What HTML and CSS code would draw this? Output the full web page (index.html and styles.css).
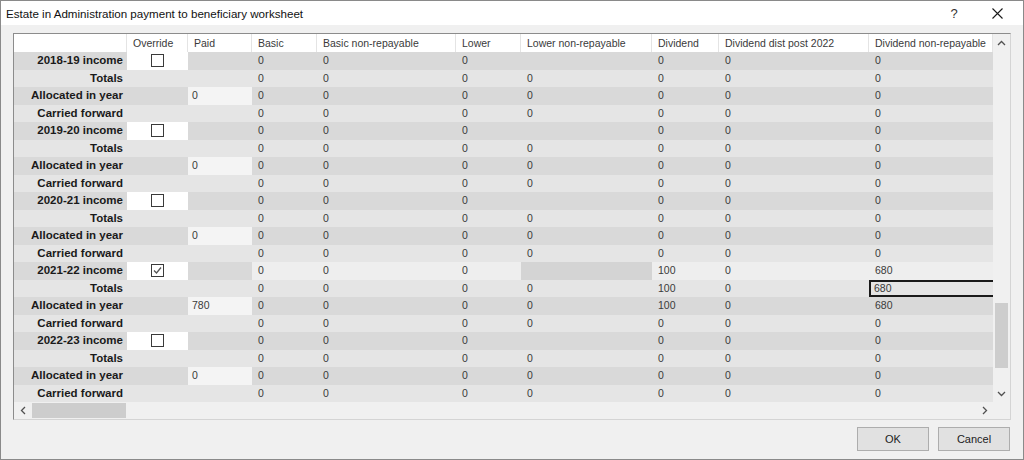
FILE: index.html
```html
<!DOCTYPE html>
<html lang="en">
  <head>
    <meta charset="UTF-8" />
    <title>Estate in Administration payment to beneficiary worksheet</title>
    <link rel="stylesheet" href="styles.css">
  </head>
  <body>
    <div id="dialog">
      <div class="titlebar">
        <span class="title">Estate in Administration payment to beneficiary worksheet</span>
        <span class="help">?</span>
        <svg class="close" width="11" height="11" viewBox="0 0 11 11">
          <path d="M0.5 0.5 L10.5 10.5 M10.5 0.5 L0.5 10.5" stroke="#1a1a1a" stroke-width="1.1" fill="none" />
        </svg>
      </div>
      <div class="content">
        <div class="frame">
          <div class="frame-top">
            <div id="sheet" class="sheet">
              <div class="row head">
                <div class="cell"></div>
                <div class="cell">Override</div>
                <div class="cell">Paid</div>
                <div class="cell">Basic</div>
                <div class="cell">Basic non-repayable</div>
                <div class="cell">Lower</div>
                <div class="cell">Lower non-repayable</div>
                <div class="cell">Dividend</div>
                <div class="cell">Dividend dist post 2022</div>
                <div class="cell">Dividend non-repayable</div>
              </div>
            </div>
            <div class="vscroll">
              <div class="arrow">
                <svg width="9" height="6" viewBox="0 0 9 6"><path d="M1 5 L4.5 1.5 L8 5" stroke="#505050" stroke-width="1.3" fill="none" /></svg>
              </div>
              <div class="track">
                <div class="vthumb"></div>
              </div>
              <div class="arrow">
                <svg width="9" height="6" viewBox="0 0 9 6"><path d="M1 1 L4.5 4.5 L8 1" stroke="#505050" stroke-width="1.3" fill="none" /></svg>
              </div>
            </div>
          </div>
          <div class="hscroll">
            <div class="arrow">
              <svg width="6" height="9" viewBox="0 0 6 9"><path d="M5 1 L1.5 4.5 L5 8" stroke="#505050" stroke-width="1.3" fill="none" /></svg>
            </div>
            <div class="hthumb"></div>
            <div class="spacer"></div>
            <div class="arrow">
              <svg width="6" height="9" viewBox="0 0 6 9"><path d="M1 1 L4.5 4.5 L1 8" stroke="#505050" stroke-width="1.3" fill="none" /></svg>
            </div>
            <div class="corner"></div>
          </div>
        </div>
      </div>
      <div class="buttons">
        <button class="button">OK</button>
        <button class="button">Cancel</button>
      </div>
    </div>
    <script>
      const years = ["2018-19", "2019-20", "2020-21", "2021-22", "2022-23"];
      const sheet = document.getElementById("sheet");

      const checkbox = (checked) => {
        const tick = checked
          ? '<svg width="11" height="11" viewBox="0 0 11 11"><path d="M2 5.5 L4.5 8 L9 2.5" stroke="#555" stroke-width="1.3" fill="none" /></svg>'
          : "";
        return '<span class="box">' + tick + "</span>";
      };

      const addRow = (label, cells, tone) => {
        const row = document.createElement("div");
        row.className = "row " + tone;
        const head = document.createElement("div");
        head.className = "cell label";
        head.textContent = label;
        row.appendChild(head);
        cells.forEach((cell) => {
          const el = document.createElement("div");
          const item = typeof cell === "string" ? { t: cell } : cell;
          el.className = "cell " + (item.c || "");
          if (item.html) {
            el.innerHTML = item.html;
          } else {
            el.textContent = item.t;
          }
          row.appendChild(el);
        });
        sheet.appendChild(row);
      };

      years.forEach((year) => {
        const live = year === "2021-22";
        const div = live ? "100" : "0";
        const dnr = live ? "680" : "0";
        const hi = live ? "hi" : "";

        addRow(
          year + " income",
          [
            { html: checkbox(live), c: "white check" },
            "",
            { t: "0", c: hi },
            { t: "0", c: hi },
            { t: "0", c: hi },
            { t: "", c: live ? "dim" : "" },
            { t: div, c: hi },
            { t: "0", c: hi },
            { t: dnr, c: hi },
          ],
          "dark"
        );
        addRow(
          "Totals",
          ["", "", "0", "0", "0", "0", div, "0", { t: dnr, c: live ? "focus" : "" }],
          "light"
        );
        addRow(
          "Allocated in year",
          ["", { t: live ? "780" : "0", c: "edit" }, "0", "0", "0", "0", div, "0", dnr],
          "dark"
        );
        addRow("Carried forward", ["", "", "0", "0", "0", "0", "0", "0", "0"], "light");
      });
    </script>
  </body>
</html>
```

FILE: styles.css
```css
* {
  margin: 0;
  padding: 0;
  box-sizing: border-box;
}

body {
  width: 1024px;
  height: 460px;
  overflow: hidden;
  background-color: #f0f0f0;
  font-family: "Liberation Sans", Arial, sans-serif;
}

#dialog {
  width: 1024px;
  height: 460px;
  display: flex;
  flex-direction: column;
  border: 1px solid #8a8a8a;
  background-color: #f0f0f0;
}

.titlebar {
  height: 24px;
  display: flex;
  align-items: center;
  padding: 0 20px 0 5px;
  background-color: #ffffff;
  font-size: 11.6px;
  color: #111;
}

.title {
  flex: 1;
}

.help {
  width: 14px;
  text-align: center;
  font-size: 13px;
  color: #333;
  margin-right: 31px;
}

.content {
  padding: 8px 12px 0 12px;
}

.frame {
  width: 998px;
  border: 1px solid;
  border-color: #8c8c8c #d4d4d4 #d4d4d4 #8c8c8c;
}

.frame-top {
  display: flex;
}

.sheet {
  width: 979px;
}

.row {
  display: grid;
  grid-template-columns: 113px 61px 64px 65px 139px 65px 131px 67px 150px 124px;
  height: 17.5px;
  font-size: 10.5px;
  color: #3a3a3a;
}

.row.head {
  height: 18px;
  background-color: #ffffff;
}

.row.head .cell {
  line-height: 18px;
  padding-left: 6px;
  border-right: 1px solid #e4e4e4;
  white-space: nowrap;
}

.row.dark {
  background-color: #d9d9d9;
}

.row.light {
  background-color: #e5e5e5;
}

.cell {
  line-height: 17.5px;
  padding-left: 6px;
  white-space: nowrap;
  overflow: hidden;
}

.cell.label {
  text-align: right;
  padding: 0 4px 0 0;
  font-size: 11.5px;
  font-weight: bold;
  color: #1a1a1a;
}

.cell.white {
  background-color: #ffffff;
}

.cell.check {
  display: flex;
  justify-content: center;
  align-items: center;
  padding: 0;
}

.box {
  width: 13px;
  height: 13px;
  border: 1px solid #3a3a3a;
  background-color: #ffffff;
  display: flex;
  align-items: center;
  justify-content: center;
}

.cell.edit {
  background-color: #f4f4f4;
  padding-left: 4px;
}

.cell.hi {
  background-color: #eeeeee;
}

.cell.dim {
  background-color: #d4d4d4;
}

.cell.focus {
  border: 2px solid #1a1a1a;
  border-right: none;
  line-height: 13.5px;
  padding-left: 3px;
}

.vscroll {
  width: 17px;
  display: flex;
  flex-direction: column;
  background-color: #f0f0f0;
}

.arrow {
  width: 17px;
  height: 17px;
  display: flex;
  align-items: center;
  justify-content: center;
}

.track {
  flex: 1;
}

.vthumb {
  width: 13px;
  height: 65px;
  margin: 252px 0 0 2px;
  background-color: #cdcdcd;
}

.hscroll {
  height: 17px;
  display: flex;
  background-color: #f0f0f0;
}

.hthumb {
  width: 94px;
  height: 15px;
  margin: 1px 0 0 1px;
  background-color: #cdcdcd;
}

.spacer {
  flex: 1;
}

.corner {
  width: 17px;
}

.buttons {
  display: flex;
  justify-content: flex-end;
  gap: 9px;
  padding: 7px 13px 0 0;
}

.button {
  width: 72px;
  height: 24px;
  background-color: #e1e1e1;
  border: 1px solid #adadad;
  font-family: "Liberation Sans", Arial, sans-serif;
  font-size: 11px;
  color: #222;
}
```
